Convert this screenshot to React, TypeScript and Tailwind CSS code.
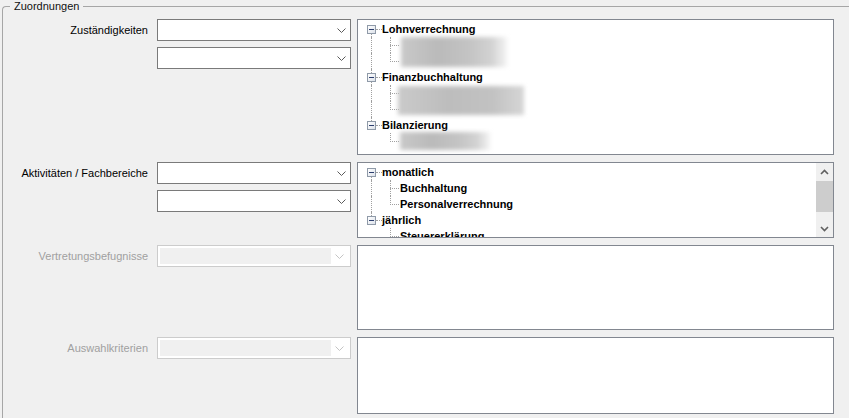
import React from "react";

const LINE = "border-dotted border-[#a0a0a0]";

function Chevron({ disabled }: { disabled?: boolean }) {
  return (
    <svg width="9" height="5" viewBox="0 0 9 5" className="block">
      <path d="M0.5 0.5 L4.5 4.5 L8.5 0.5" fill="none" stroke={disabled ? "#c4c4c4" : "#5a5a5a"} strokeWidth="1" />
    </svg>
  );
}

function Combo() {
  return (
    <div className="flex h-[22px] w-[194px] items-center justify-end border border-[#7a7a7a] bg-white">
      <div className="flex h-full w-[17px] items-center justify-center">
        <Chevron />
      </div>
    </div>
  );
}

function DisabledCombo() {
  return (
    <div className="flex h-[22px] w-[194px] border border-[#cccccc] bg-white p-[2px]">
      <div className="flex-1 bg-[#f0f0f0]" />
      <div className="flex h-full w-[17px] items-center justify-center">
        <Chevron disabled />
      </div>
    </div>
  );
}

function Expander() {
  return (
    <div className="absolute left-[9px] top-[4px] h-[9px] w-[9px] border border-[#8f9aa8] bg-[linear-gradient(135deg,#ffffff,#dde2ea)]">
      <div className="absolute left-[1px] top-[3px] h-[1px] w-[5px] bg-[#2c3e6e]" />
    </div>
  );
}

function RootRow({ label, first, last }: { label: string; first?: boolean; last?: boolean }) {
  return (
    <div className="flex h-[16px] items-center">
      <div className="relative h-full w-[24px] shrink-0">
        {!first && <div className={`absolute left-[13px] top-0 h-[4px] border-l ${LINE}`} />}
        {!last && <div className={`absolute bottom-0 left-[13px] top-[13px] border-l ${LINE}`} />}
        <Expander />
        <div className={`absolute left-[18px] top-[8px] w-[6px] border-t ${LINE}`} />
      </div>
      <span className="whitespace-nowrap font-bold leading-[16px] text-black">{label}</span>
    </div>
  );
}

function ChildRow({
  label,
  rootContinues,
  lastChild,
}: {
  label?: string;
  rootContinues?: boolean;
  lastChild?: boolean;
}) {
  return (
    <div className="flex h-[16px] items-center">
      <div className="relative h-full w-[32px] shrink-0">
        {rootContinues && <div className={`absolute bottom-0 left-[13px] top-0 border-l ${LINE}`} />}
      </div>
      <div className="relative h-full w-[9px] shrink-0">
        <div className={`absolute left-0 top-0 border-l ${LINE} ${lastChild ? "h-[9px]" : "h-full"}`} />
        <div className={`absolute left-0 top-[8px] w-[9px] border-t ${LINE}`} />
      </div>
      {label && <span className="ml-[1px] whitespace-nowrap font-bold leading-[16px] text-black">{label}</span>}
    </div>
  );
}

function Blob({ className }: { className: string }) {
  return (
    <div
      className={`absolute blur-[2px] bg-[linear-gradient(90deg,#c9c9c9,#bababa_35%,#c4c4c4_65%,#d2d2d2_85%,#f4f4f4)] ${className}`}
    />
  );
}

function TreeOne() {
  return (
    <div className="h-[136px] w-[477px] overflow-hidden border border-[#828790] bg-white pt-[1px]">
      <RootRow label="Lohnverrechnung" first />
      <div className="relative">
        <ChildRow rootContinues />
        <ChildRow rootContinues lastChild />
        <Blob className="left-[43px] top-0 h-[30px] w-[106px]" />
      </div>
      <RootRow label="Finanzbuchhaltung" />
      <div className="relative">
        <ChildRow rootContinues />
        <ChildRow rootContinues lastChild />
        <Blob className="left-[40px] top-[1px] h-[29px] w-[126px] bg-[linear-gradient(90deg,#cacaca,#bdbdbd_40%,#c2c2c2_75%,#d6d6d6)]" />
      </div>
      <RootRow label="Bilanzierung" last />
      <div className="relative">
        <ChildRow lastChild />
        <Blob className="left-[42px] top-[-1px] h-[18px] w-[90px]" />
      </div>
    </div>
  );
}

function ScrollArrow({ up }: { up?: boolean }) {
  return (
    <div className="flex h-[17px] w-[17px] items-center justify-center">
      <svg width="9" height="6" viewBox="0 0 9 6" className="block">
        <path
          d={up ? "M1 5 L4.5 1.5 L8 5" : "M1 1 L4.5 4.5 L8 1"}
          fill="none"
          stroke="#606060"
          strokeWidth="1.6"
        />
      </svg>
    </div>
  );
}

function TreeTwo() {
  return (
    <div className="flex h-[76px] w-[477px] border border-[#828790] bg-white">
      <div className="flex-1 overflow-hidden pt-[1px]">
        <RootRow label="monatlich" first />
        <ChildRow label="Buchhaltung" rootContinues />
        <ChildRow label="Personalverrechnung" rootContinues lastChild />
        <RootRow label="jährlich" last />
        <ChildRow label="Steuererklärung" lastChild />
      </div>
      <div className="flex w-[17px] flex-col bg-[#f0f0f0]">
        <ScrollArrow up />
        <div className="flex-1 pt-[1px]">
          <div className="h-[31px] w-full bg-[#cdcdcd]" />
        </div>
        <ScrollArrow />
      </div>
    </div>
  );
}

function Label({ text, disabled }: { text: string; disabled?: boolean }) {
  return (
    <div
      className={`flex h-[22px] w-[146px] shrink-0 items-center justify-end whitespace-nowrap pr-[1px] ${
        disabled ? "text-[#a0a0a0]" : "text-black"
      }`}
    >
      {text}
    </div>
  );
}

export default function App() {
  return (
    <div className="h-[418px] w-[849px] overflow-hidden bg-[#f0f0f0] pl-[2px] pt-[6px] font-['Liberation_Sans',Arial,sans-serif] text-[11px]">
      <div className="relative h-[440px] w-[870px] rounded-tl-[4px] border-l border-t border-[#a6a6a6] pt-[12px]">
        <div className="absolute left-[7px] top-[-8px] bg-[#f0f0f0] px-[4px] leading-[14px] text-[#111]">Zuordnungen</div>
        <div className="flex flex-col gap-[7px]">
          <div className="flex items-start">
            <Label text="Zuständigkeiten" />
            <div className="ml-[8px] flex flex-col gap-[6px]">
              <Combo />
              <Combo />
            </div>
            <div className="ml-[6px]">
              <TreeOne />
            </div>
          </div>
          <div className="flex items-start">
            <Label text="Aktivitäten / Fachbereiche" />
            <div className="ml-[8px] flex flex-col gap-[6px]">
              <Combo />
              <Combo />
            </div>
            <div className="ml-[6px]">
              <TreeTwo />
            </div>
          </div>
          <div className="flex items-start">
            <Label text="Vertretungsbefugnisse" disabled />
            <div className="ml-[8px]">
              <DisabledCombo />
            </div>
            <div className="ml-[6px] h-[85px] w-[477px] border border-[#828790] bg-white" />
          </div>
          <div className="flex items-start">
            <Label text="Auswahlkriterien" disabled />
            <div className="ml-[8px]">
              <DisabledCombo />
            </div>
            <div className="ml-[6px] h-[77px] w-[477px] border border-[#828790] bg-white" />
          </div>
        </div>
      </div>
    </div>
  );
}
